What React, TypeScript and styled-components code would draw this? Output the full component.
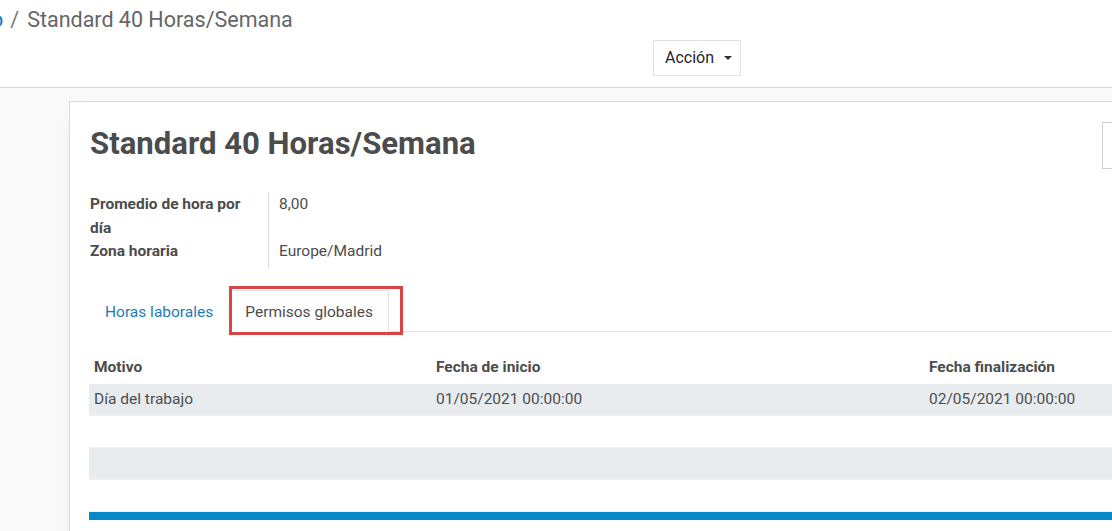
import React from "react";
import styled, { createGlobalStyle } from "styled-components";

const GlobalStyle = createGlobalStyle`
  html, body {
    margin: 0;
    padding: 0;
    width: 1112px;
    height: 531px;
    overflow: hidden;
    background: #f9f9f9;
    font-family: Roboto, "Liberation Sans", Arial, sans-serif;
    color: #4c4c4c;
  }
`;

const rows = [
  { motivo: "Día del trabajo", inicio: "01/05/2021 00:00:00", fin: "02/05/2021 00:00:00" },
  { motivo: "", inicio: "", fin: "" },
  { motivo: "", inicio: "", fin: "" },
  { motivo: "", inicio: "", fin: "" },
];

function App() {
  return (
    <React.Fragment>
      <GlobalStyle />
      <ControlPanel>
        <Breadcrumb>
          <CrumbLink>o</CrumbLink>
          <CrumbSep>/</CrumbSep>
          <CrumbActive>Standard 40 Horas/Semana</CrumbActive>
        </Breadcrumb>
        <ActionsRow>
          <DropdownButton>
            Acción <Caret />
          </DropdownButton>
        </ActionsRow>
      </ControlPanel>
      <FormArea>
        <Sheet>
          <TitleRow>
            <Title>Standard 40 Horas/Semana</Title>
            <ButtonBox />
          </TitleRow>
          <FieldGroup>
            <FieldLabel>Promedio de hora por día</FieldLabel>
            <FieldValue>8,00</FieldValue>
            <FieldLabel>Zona horaria</FieldLabel>
            <FieldValue>Europe/Madrid</FieldValue>
          </FieldGroup>
          <Tabs>
            <Tab>Horas laborales</Tab>
            <Tab $active>
              Permisos globales
              <Highlight />
            </Tab>
          </Tabs>
          <Table>
            <thead>
              <tr>
                <Th $width={342}>Motivo</Th>
                <Th $width={493}>Fecha de inicio</Th>
                <Th>Fecha finalización</Th>
              </tr>
            </thead>
            <tbody>
              {rows.map((row, index) => (
                <Tr key={index} $striped={index % 2 === 0}>
                  <Td>{row.motivo}</Td>
                  <Td>{row.inicio}</Td>
                  <Td>{row.fin}</Td>
                </Tr>
              ))}
            </tbody>
          </Table>
          <BlueBar />
        </Sheet>
      </FormArea>
    </React.Fragment>
  );
}

export default App;

const ControlPanel = styled.div`
  background: #ffffff;
  border-bottom: 1px solid #d6d6d6;
  height: 88px;
  box-sizing: border-box;
  display: flex;
  flex-direction: column;
`;

const Breadcrumb = styled.div`
  display: flex;
  align-items: center;
  height: 38px;
  font-size: 21.5px;
  margin-left: -9px;
`;

const CrumbLink = styled.span`
  color: #1f7ab2;
`;

const CrumbSep = styled.span`
  color: #777777;
  padding: 0 8px 0 7px;
`;

const CrumbActive = styled.span`
  color: #666666;
`;

const ActionsRow = styled.div`
  display: flex;
  padding-left: 653px;
  padding-top: 2px;
`;

const DropdownButton = styled.div`
  display: flex;
  align-items: center;
  gap: 10px;
  height: 36px;
  width: 88px;
  box-sizing: border-box;
  padding: 0 11px 2px;
  border: 1px solid #dee2e6;
  font-size: 16px;
  color: #212529;
  background: #fff;
`;

const Caret = styled.span`
  width: 0;
  height: 0;
  border-left: 4px solid transparent;
  border-right: 4px solid transparent;
  border-top: 4px solid #333;
  margin-top: 1px;
`;

const FormArea = styled.div`
  padding: 13px 0 0 69px;
`;

const Sheet = styled.div`
  width: 1200px;
  min-height: 460px;
  background: #ffffff;
  border: 1px solid #d9d9d9;
  box-shadow: 0 5px 20px -15px rgba(0, 0, 0, 0.4);
  padding: 20px 0 0 20px;
  box-sizing: border-box;
`;

const TitleRow = styled.div`
  display: grid;
  grid-template-columns: 1012px 60px;
  align-items: start;
`;

const Title = styled.h1`
  margin: 2px 0 0;
  font-size: 31.1px;
  font-weight: 700;
  line-height: 40px;
  color: #4c4c4c;
`;

const ButtonBox = styled.div`
  height: 47px;
  border: 1px solid #cfcfcf;
  box-sizing: border-box;
`;

const FieldGroup = styled.div`
  display: grid;
  grid-template-columns: 178px 300px;
  margin-top: 24px;
  font-size: 15.5px;
  line-height: 23.5px;
`;

const FieldLabel = styled.div`
  font-weight: 700;
  color: #4c4c4c;
  padding-right: 20px;
  &:nth-of-type(3) {
    padding-bottom: 4px;
  }
`;

const FieldValue = styled.div`
  border-left: 1px solid #dcdcdc;
  padding-left: 10px;
  color: #4c4c4c;
`;

const Tabs = styled.div`
  display: flex;
  margin-top: 22px;
  margin-left: -1px;
  border-bottom: 1px solid #dee2e6;
  height: 41px;
`;

const Tab = styled.div<{ $active?: boolean }>`
  position: relative;
  display: flex;
  align-items: center;
  padding: 2px 15px 0 ${(p) => (p.$active ? "13px" : "15px")};
  height: 42px;
  box-sizing: border-box;
  font-size: 15.5px;
  color: ${(p) => (p.$active ? "#4c4c4c" : "#1f7ab2")};
  background: #fff;
  margin-bottom: -1px;
  border: 1px solid ${(p) => (p.$active ? "#dee2e6" : "transparent")};
  border-bottom-color: ${(p) => (p.$active ? "#fff" : "transparent")};
  margin-left: ${(p) => (p.$active ? "2px" : "0")};
`;

const Highlight = styled.span`
  position: absolute;
  left: -3px;
  top: -5px;
  width: 174px;
  height: 49px;
  border: 3px solid #d94545;
  box-sizing: border-box;
  pointer-events: none;
`;

const Table = styled.table`
  border-collapse: collapse;
  margin-top: 19px;
  margin-left: -1px;
  width: 1100px;
  font-size: 15.5px;
  color: #4c4c4c;
`;

const Th = styled.th<{ $width?: number }>`
  text-align: left;
  font-weight: 700;
  padding: 0 5px;
  height: 33px;
  width: ${(p) => (p.$width ? `${p.$width - 10}px` : "auto")};
`;

const Tr = styled.tr<{ $striped: boolean }>`
  background: ${(p) => (p.$striped ? "#e9ecef" : "#ffffff")};
  border-bottom: 1px solid #f0f1f3;
`;

const Td = styled.td`
  height: 31px;
  padding: 0 5px;
  white-space: nowrap;
`;

const BlueBar = styled.div`
  height: 8px;
  background: #0589c9;
  width: 1100px;
  margin-left: -1px;
`;
